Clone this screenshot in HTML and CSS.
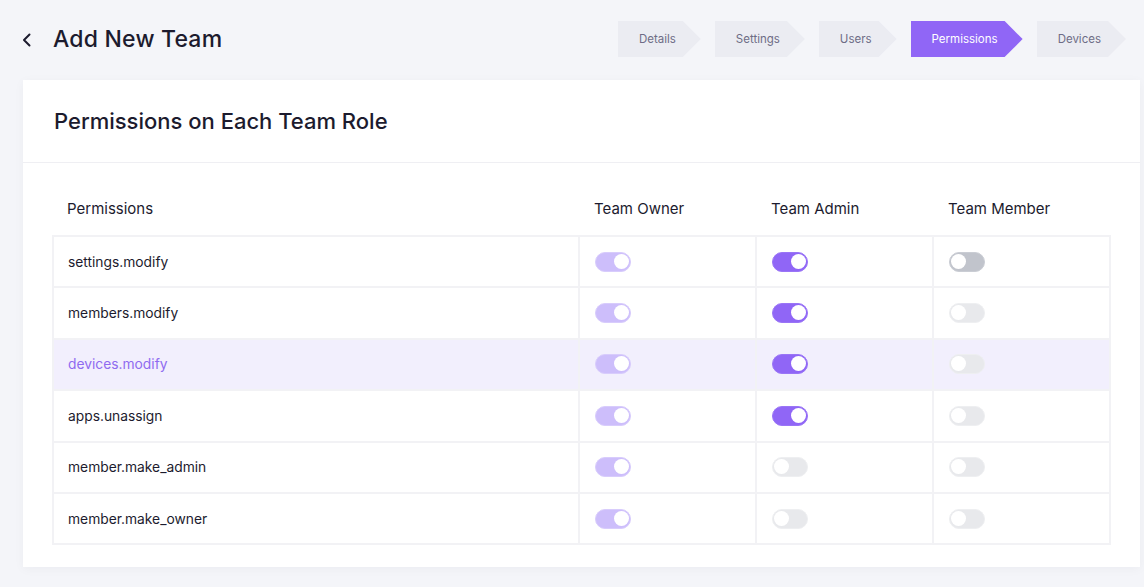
FILE: index.html
```html
<!DOCTYPE html>
<html lang="en">
<head>
<meta charset="utf-8">
<title>Add New Team</title>
<link rel="stylesheet" href="styles.css">
</head>
<body>
<header class="topbar">
  <div class="title-wrap">
    <button class="back" aria-label="Back">
      <svg width="12" height="14" viewBox="0 0 12 14"><path d="M8.5 1.5 L3 7 L8.5 12.5" fill="none" stroke="#1c1b2e" stroke-width="2" stroke-linecap="round" stroke-linejoin="round"/></svg>
    </button>
    <h1 class="page-title">Add New Team</h1>
  </div>
  <nav class="steps">
    <span class="step">Details</span>
    <span class="step">Settings</span>
    <span class="step">Users</span>
    <span class="step active">Permissions</span>
    <span class="step">Devices</span>
  </nav>
</header>

<section class="card">
  <div class="card-head">
    <h2 class="card-title">Permissions on Each Team Role</h2>
  </div>
  <div class="card-body">
    <table class="perm-table">
      <colgroup>
        <col class="c-name"><col class="c-role"><col class="c-role"><col class="c-role">
      </colgroup>
      <thead>
        <tr><th>Permissions</th><th>Team Owner</th><th>Team Admin</th><th>Team Member</th></tr>
      </thead>
      <tbody>
        <tr><td>settings.modify</td><td><span class="tg owner"></span></td><td><span class="tg on"></span></td><td><span class="tg off dark"></span></td></tr>
        <tr><td>members.modify</td><td><span class="tg owner"></span></td><td><span class="tg on"></span></td><td><span class="tg off"></span></td></tr>
        <tr class="hl"><td>devices.modify</td><td><span class="tg owner"></span></td><td><span class="tg on"></span></td><td><span class="tg off"></span></td></tr>
        <tr><td>apps.unassign</td><td><span class="tg owner"></span></td><td><span class="tg on"></span></td><td><span class="tg off"></span></td></tr>
        <tr><td>member.make_admin</td><td><span class="tg owner"></span></td><td><span class="tg off"></span></td><td><span class="tg off"></span></td></tr>
        <tr><td>member.make_owner</td><td><span class="tg owner"></span></td><td><span class="tg off"></span></td><td><span class="tg off"></span></td></tr>
      </tbody>
    </table>
  </div>
</section>
</body>
</html>
```

FILE: styles.css
```css
* { box-sizing: border-box; }
html, body { margin: 0; }
body {
  background: #f4f5f9;
  font-family: "Inter", "Open Sans", sans-serif;
  color: #1c1b2e;
  width: 1144px;
  height: 587px;
  overflow: hidden;
}
.topbar {
  display: flex;
  align-items: center;
  justify-content: space-between;
  height: 80px;
  padding: 0 18px 2px 20px;
}
.title-wrap { display: flex; align-items: center; }
.back {
  border: 0; background: none; padding: 0;
  width: 14px; height: 16px;
  display: flex; align-items: center; justify-content: center;
  margin-right: 19px;
  margin-top: 1px;
}
.page-title {
  margin: 0;
  font-size: 23px;
  font-weight: 500;
  letter-spacing: 0.2px;
}
.steps { display: flex; gap: 14px; }
.step {
  height: 36px;
  display: flex; align-items: center;
  padding: 0 25px 0 21px;
  background: #ebecf2;
  color: #6e6c86;
  font-size: 11.5px;
  clip-path: polygon(0 0, calc(100% - 18px) 0, 100% 50%, calc(100% - 18px) 100%, 0 100%);
}
.step.active { background: #9066f6; color: #fff; }

.card {
  margin: 0 4px 0 23px;
  background: #fff;
  box-shadow: 0 2px 10px rgba(30, 30, 60, 0.04);
}
.card-head {
  height: 83px;
  display: flex; align-items: center;
  padding: 0 31px 0;
  border-bottom: 1px solid #efeff3;
}
.card-title {
  margin: 0;
  font-size: 22px;
  font-weight: 500;
}
.card-body { padding: 0 29px 22px; }
.perm-table {
  width: 100%;
  border-collapse: collapse;
  table-layout: fixed;
}
.c-name { width: 526px; }
.perm-table th {
  text-align: left;
  font-weight: 400;
  font-size: 15px;
  padding: 36px 14px 16px;
  line-height: 20px;
}
.perm-table th + th { padding-left: 15px; }
.perm-table td {
  height: 51.4px;
  padding: 0 14px;
  font-size: 13.8px;
  border: 2px solid #f2f2f5;
}
.perm-table tr.hl td { background: #f2effd; }
.perm-table tr.hl td:first-child { color: #8f6bf0; }
.tg {
  display: block;
  width: 36px; height: 20px;
  border-radius: 10px;
  position: relative;
  border: 1.5px solid transparent;
  margin-left: 1px;
}
.tg::after {
  content: "";
  position: absolute;
  top: 1px;
  width: 15px; height: 15px;
  border-radius: 50%;
  background: #fff;
}
.tg.owner { background: #cdbefb; border-color: #d8ccfc; }
.tg.owner::after { right: 1px; }
.tg.on { background: #9066f6; border-color: #9a75f6; }
.tg.on::after { right: 1px; }
.tg.off { background: #e8e9ec; border-color: #eeeff1; }
.tg.off::after { left: 1px; }
.tg.off.dark { background: #c1c4cc; border-color: #cacdd4; }
```
